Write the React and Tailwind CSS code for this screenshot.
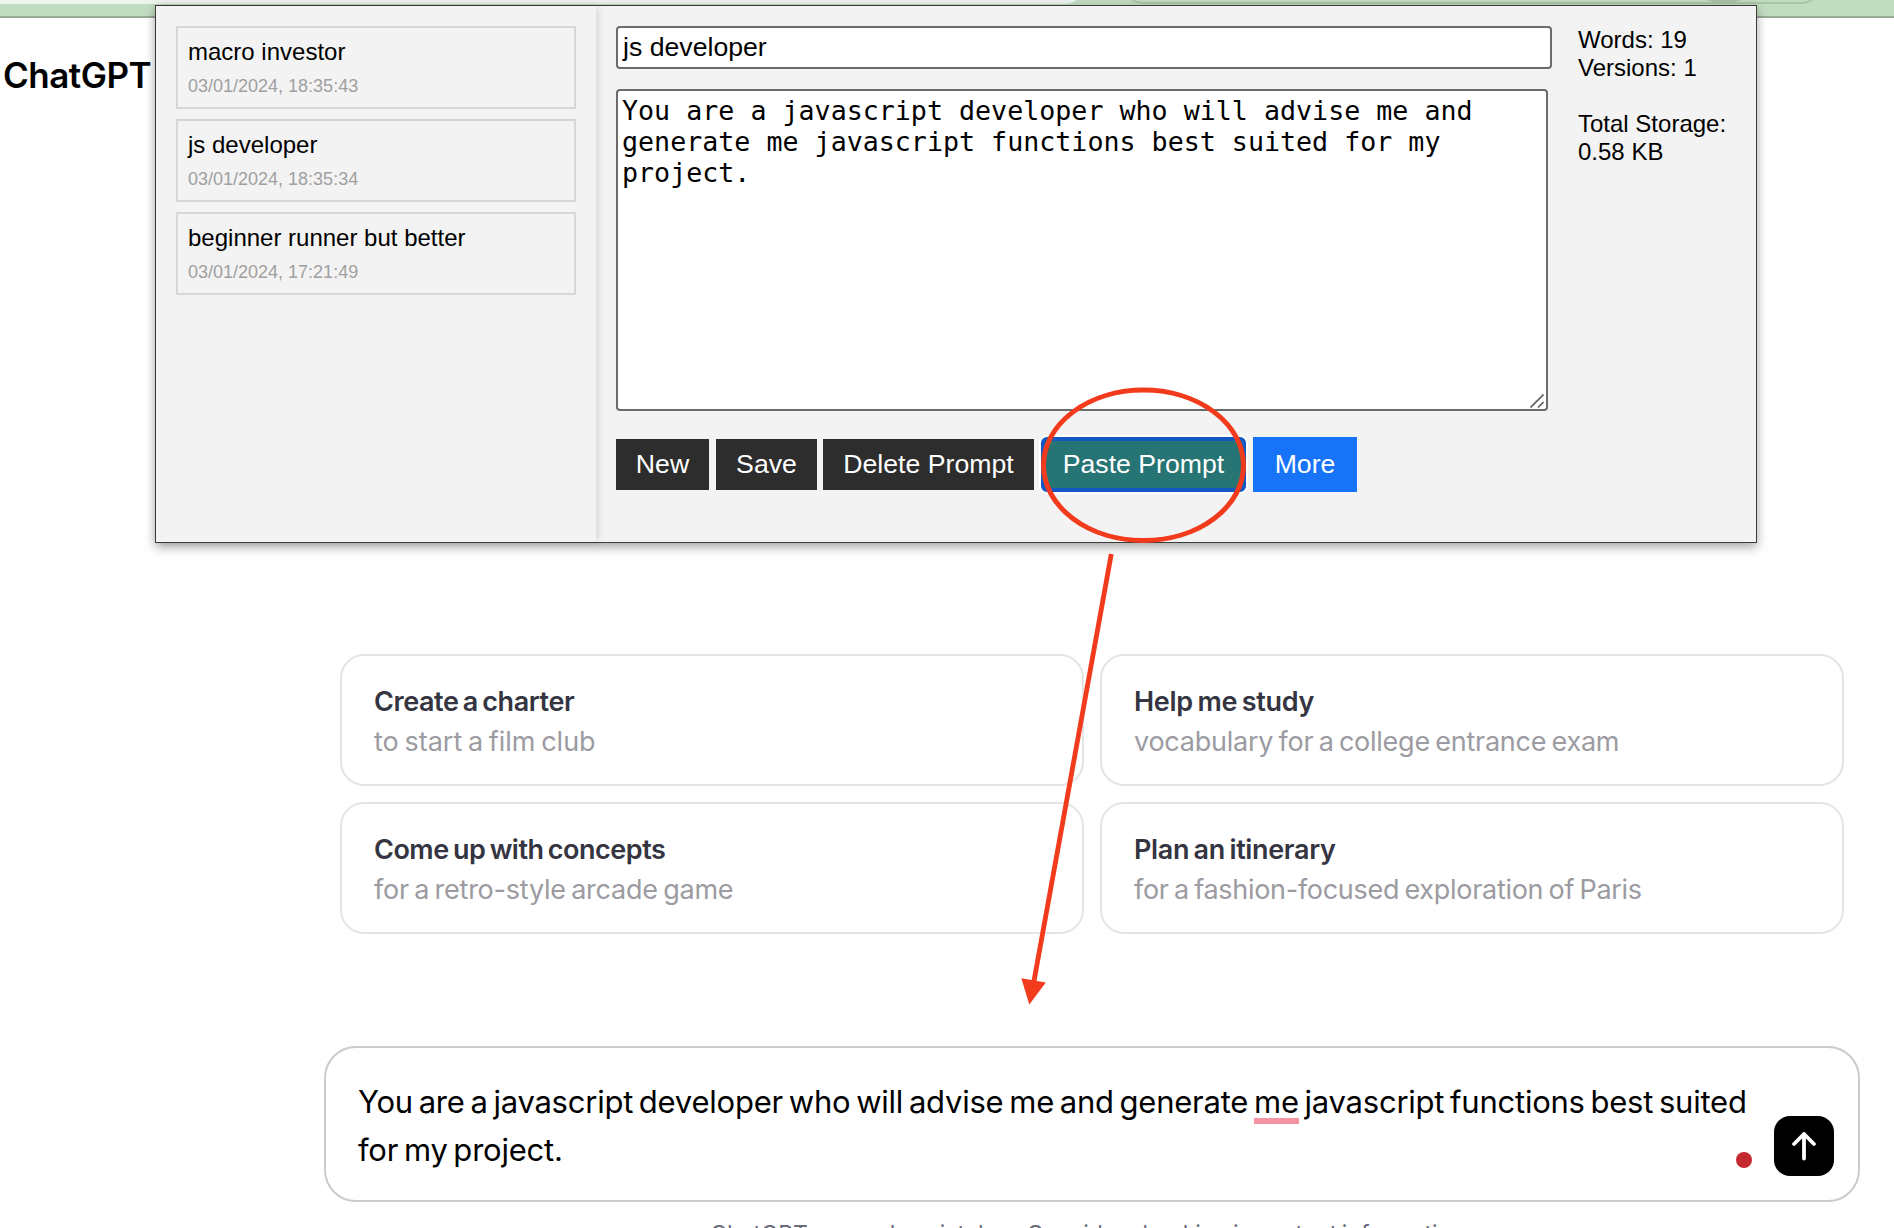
const prompts = [
  { title: "macro investor", date: "03/01/2024, 18:35:43" },
  { title: "js developer", date: "03/01/2024, 18:35:34" },
  { title: "beginner runner but better", date: "03/01/2024, 17:21:49" },
];

const suggestions = [
  { title: "Create a charter", text: "to start a film club", t: "tracking-[-0.42px]", s: "tracking-[0.02px]" },
  { title: "Help me study", text: "vocabulary for a college entrance exam", t: "tracking-[-0.28px]", s: "tracking-[-0.25px]" },
  { title: "Come up with concepts", text: "for a retro-style arcade game", t: "tracking-[-0.49px]", s: "tracking-[-0.23px]" },
  { title: "Plan an itinerary", text: "for a fashion-focused exploration of Paris", t: "tracking-[-0.34px]", s: "tracking-[-0.29px]" },
];

function BrowserBar() {
  return (
    <div className="h-[18px] border-b-2 border-[#98ab98] bg-[#c1dcc0]">
      <div className="flex h-1 overflow-hidden">
        <div className="-mt-9 h-10 w-[1085px] shrink-0 rounded-br-[20px] bg-[#edf4ed]" />
        <div className="-mt-9 ml-[38px] flex h-10 w-[698px] shrink-0 items-end justify-end rounded-[20px] border-2 border-[#a9c4a9] bg-[#c1dcc0] pr-[57px]">
          <div className="-mb-[1.5px] size-[76px] shrink-0 rounded-full bg-[#a9c1a9]" />
        </div>
      </div>
    </div>
  );
}

function PromptItem({ title, date }) {
  return (
    <li className="h-[83px] border-2 border-[#d7d7d7] px-2.5 pt-2.5">
      <div className="text-[24px] leading-7 text-black">{title}</div>
      <div className="mt-2.5 text-[18px] leading-5 text-[#a0a0a0]">{date}</div>
    </li>
  );
}

function ExtensionPopup() {
  return (
    <div className="absolute left-[155px] top-[5px] flex h-[538px] w-[1602px] border border-[#3c3c3a] bg-[#f3f3f3] font-['Liberation_Sans',Arial,sans-serif] text-black shadow-[0_4px_10px_rgba(0,0,0,0.36)]">
      <aside className="w-[440px] shrink-0 bg-[#f3f3f3] px-5 pt-5 shadow-[3px_0_8px_-1px_rgba(0,0,0,0.12)]">
        <ul className="flex flex-col gap-2.5">
          {prompts.map((p) => (
            <PromptItem key={p.date} {...p} />
          ))}
        </ul>
      </aside>
      <main className="ml-5 w-[936px] shrink-0 pt-5">
        <div className="h-[43px] rounded-[4px] border-2 border-[#6b6b6b] bg-white px-[5px] text-[26.67px] leading-[39px]">
          js developer
        </div>
        <div className="relative mt-5 h-[322px] w-[932px] rounded-[4px] border-2 border-[#6b6b6b] bg-white px-1 py-1 font-['DejaVu_Sans_Mono',monospace] text-[26.67px] leading-[31px]">
          You are a javascript developer who will advise me and
          <br />
          generate me javascript functions best suited for my
          <br />
          project.
          <svg className="absolute bottom-px right-0.5 size-[14px]" viewBox="0 0 14 14" stroke="#5f5f5f" strokeWidth="1.6">
            <path d="M.5 13.5 13.5 .5M8 13.5 13.5 8" />
          </svg>
        </div>
        <div className="mt-[26px] flex h-[55px] items-center text-[26.67px] leading-[46px] text-white">
          <button className="h-[51px] w-[93px] bg-[#2d2d2d] pb-0.5">New</button>
          <button className="ml-[7px] h-[51px] w-[101px] bg-[#2d2d2d] pb-0.5">Save</button>
          <button className="ml-1.5 h-[51px] w-[211px] bg-[#2d2d2d] pb-0.5">Delete Prompt</button>
          <button className="ml-[7px] flex h-[55px] w-[205px] items-center justify-center rounded-[6px] border-4 border-[#1158c4] bg-[#277475] pb-0.5 shadow-[0_0_0_2px_#fff]">
            Paste Prompt
          </button>
          <button className="ml-[7px] h-[55px] w-[104px] bg-[#1774f8] pb-0.5">More</button>
        </div>
      </main>
      <div className="ml-[5px] h-[186px] w-px bg-[#e8f4e4]" />
      <section className="ml-5 pt-5 text-[24px] leading-7">
        <p>Words: 19</p>
        <p>Versions: 1</p>
        <p className="mt-7">Total Storage:</p>
        <p>0.58 KB</p>
      </section>
    </div>
  );
}

function Annotation() {
  return (
    <svg className="pointer-events-none absolute left-[1010px] top-[380px] h-[640px] w-[250px]" viewBox="1010 380 250 640" fill="none">
      <ellipse cx="1143.5" cy="465.3" rx="100" ry="75.2" stroke="#f23a1c" strokeWidth="5" />
      <path d="M1111.3 554 1034 981" stroke="#f23a1c" strokeWidth="4.8" />
      <path d="M1021.3 978.2 1045.8 982.4 1029.3 1004.6Z" fill="#f23a1c" />
    </svg>
  );
}

export default function App() {
  return (
    <div className="relative h-[1228px] w-full overflow-hidden bg-white font-['Inter',sans-serif]">
      <BrowserBar />
      <h1 className="ml-[3px] mt-[37px] h-10 text-[35px] font-semibold leading-10 tracking-[-0.5px] text-black">ChatGPT</h1>
      <div className="ml-[340px] mt-[559px] grid w-[1504px] grid-cols-2 gap-4">
        {suggestions.map((s) => (
          <div key={s.title} className="h-[132px] whitespace-nowrap rounded-[24px] border-2 border-[#e4e4e4] px-8 pt-[26px] text-[27px] leading-10 [word-spacing:-2px]">
            <div className={"font-semibold text-[#343541] " + s.t}>{s.title}</div>
            <div className={"text-[#9b9ba1] " + s.s}>{s.text}</div>
          </div>
        ))}
      </div>
      <div className="ml-[324px] mt-28 flex h-[156px] w-[1536px] rounded-[32px] border-2 border-[#cbcbcb] pl-8 pr-6">
        <div className="w-[1378px] shrink-0 whitespace-nowrap pt-[30px] text-[31px] leading-[48px] tracking-[-0.23px] text-black [word-spacing:-2.7px]">
          You are a javascript developer who will advise me and generate{" "}
          <span className="inline-block h-[46px] border-b-[6px] border-[#f493a2] align-top">me</span> javascript functions best suited
          <br />
          for my project.
        </div>
        <div className="mt-[104px] size-4 shrink-0 rounded-full bg-[#c4292f]" />
        <button className="ml-[22px] mt-[68px] flex size-[60px] shrink-0 items-center justify-center rounded-[16px] bg-black">
          <svg className="size-[30px]" viewBox="0 0 30 30" fill="none" stroke="#fff" strokeWidth="3.8" strokeLinecap="round" strokeLinejoin="round">
            <path d="M15 27.5V3M5 13 15 3l10 10" />
          </svg>
        </button>
      </div>
      <p className="ml-[323px] mt-4 w-[1536px] whitespace-nowrap text-center text-[23px] leading-8 text-[#6b6c7b] [word-spacing:-2px]">
        ChatGPT can make mistakes. Consider checking important information.
      </p>
      <ExtensionPopup />
      <Annotation />
    </div>
  );
}
